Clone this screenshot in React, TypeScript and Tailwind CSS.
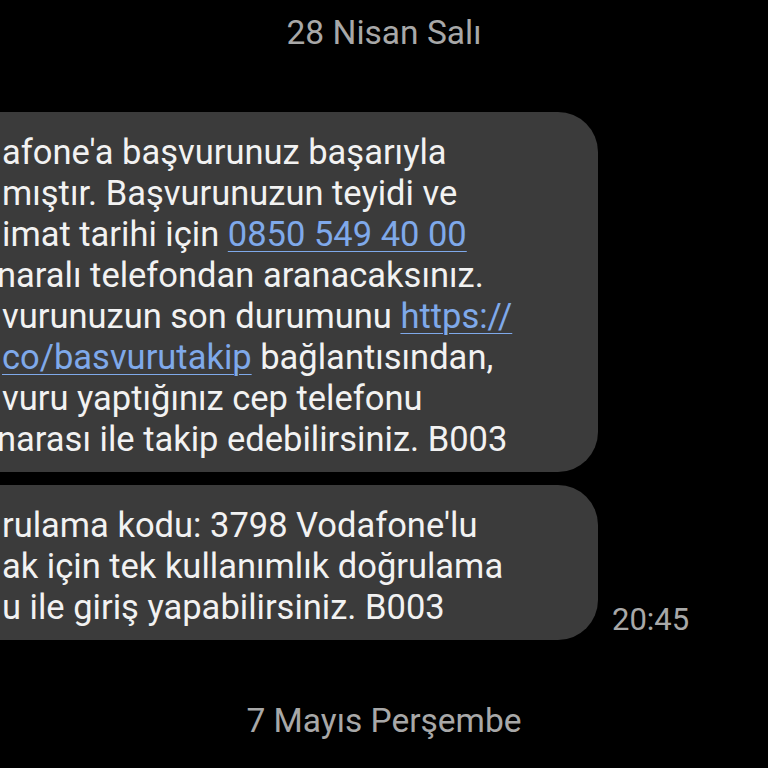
import React from 'react';

type Part = { text: string; link?: boolean };
type Line = { parts: Part[]; shift?: boolean };

const first: Line[] = [
  { parts: [{ text: "afone'a başvurunuz başarıyla" }] },
  { parts: [{ text: 'mıştır. Başvurunuzun teyidi ve' }] },
  { parts: [{ text: 'imat tarihi için ' }, { text: '0850 549 40 00', link: true }] },
  { parts: [{ text: 'naralı telefondan aranacaksınız.' }], shift: true },
  { parts: [{ text: 'vurunuzun son durumunu ' }, { text: 'https://', link: true }] },
  { parts: [{ text: 'co/basvurutakip', link: true }, { text: ' bağlantısından,' }] },
  { parts: [{ text: 'vuru yaptığınız cep telefonu' }] },
  { parts: [{ text: 'narası ile takip edebilirsiniz. B003' }], shift: true },
];

const second: Line[] = [
  { parts: [{ text: "rulama kodu: 3798 Vodafone'lu" }] },
  { parts: [{ text: 'ak için tek kullanımlık doğrulama' }] },
  { parts: [{ text: 'u ile giriş yapabilirsiniz. B003' }] },
];

const Bubble: React.FC<{ lines: Line[] }> = ({ lines }) => (
  <div className="ml-[-40px] w-[638px] shrink-0 rounded-[40px] bg-[#3b3b3b] pl-[42px] pt-[20px] pb-[12px] text-[34.5px] leading-[41px] text-[#f2f2f2]">
    {lines.map((line, i) => (
      <div key={i} className={line.shift ? 'ml-[-5px] whitespace-nowrap' : 'whitespace-nowrap'}>
        {line.parts.map((p, j) =>
          p.link ? (
            <span key={j} className="text-[#7fa9ea] underline decoration-1 underline-offset-[5px]">
              {p.text}
            </span>
          ) : (
            <span key={j}>{p.text}</span>
          )
        )}
      </div>
    ))}
  </div>
);

export default function App() {
  return (
    <div
      className="flex h-[768px] w-[768px] flex-col overflow-hidden bg-black"
      style={{ fontFamily: 'Roboto, "Noto Sans", sans-serif' }}
    >
      <div className="flex h-[66px] items-center justify-center text-[33.5px] text-[#a8a8a8]">28 Nisan Salı</div>
      <div className="mt-[46px] flex flex-col gap-[13px]">
        <Bubble lines={first} />
        <div className="flex items-end">
          <Bubble lines={second} />
          <div className="ml-[14px] mb-[5px] text-[31px] leading-none text-[#a8a8a8]">20:45</div>
        </div>
      </div>
      <div className="mt-[56px] flex h-[50px] items-center justify-center text-[33.5px] text-[#a8a8a8]">
        7 Mayıs Perşembe
      </div>
    </div>
  );
}
